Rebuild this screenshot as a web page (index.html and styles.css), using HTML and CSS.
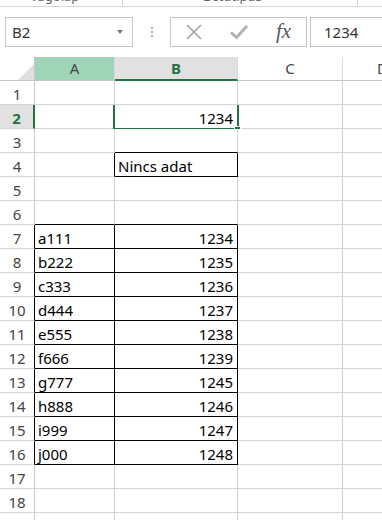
FILE: index.html
```html
<!DOCTYPE html>
<html lang="hu">
<head>
    <meta charset="UTF-8">
    <title>Munkafüzet</title>
    <link rel="stylesheet" href="styles.css">
</head>
<body>

    <!-- bottom edge of the ribbon -->
    <div class="ribbon">
        <div class="group g1"><span class="label">Vágólap</span></div>
        <div class="group g2"><span class="label">Betűtípus</span></div>
    </div>

    <!-- name box + formula bar -->
    <div class="formula-bar">
        <div class="name-box">
            <span>B2</span>
            <span class="arrow"></span>
        </div>
        <div class="grip"><i></i><i></i><i></i></div>
        <div class="fx-buttons">
            <span class="btn">
                <svg width="18" height="18" viewBox="0 0 18 18"><path d="M2 2 L16 16 M16 2 L2 16" stroke="#a3a3a3" stroke-width="1.6" fill="none"/></svg>
            </span>
            <span class="btn">
                <svg width="20" height="16" viewBox="0 0 20 16"><path d="M2 8.5 L7.5 13.5 L18 2" stroke="#b0b0b0" stroke-width="3" fill="none"/></svg>
            </span>
            <span class="btn fx">fx</span>
        </div>
        <div class="formula-input">1234</div>
    </div>

    <!-- the sheet -->
    <div class="sheet">
        <div class="row hdr">
            <div class="rh corner"><span class="tri"></span></div>
            <div class="ca col-on">A</div>
            <div class="cb col-sel">B</div>
            <div class="cc">C</div>
            <div class="cd">D</div>
        </div>
        <div class="row">
            <div class="rh">1</div><div class="ca"></div><div class="cb"></div><div class="cc"></div><div class="cd"></div>
        </div>
        <div class="row">
            <div class="rh rh-sel">2</div><div class="ca"></div>
            <div class="cb num sel-cell">1234<span class="sel"></span><span class="handle"></span></div>
            <div class="cc"></div><div class="cd"></div>
        </div>
        <div class="row">
            <div class="rh">3</div><div class="ca"></div><div class="cb bk-b"></div><div class="cc"></div><div class="cd"></div>
        </div>
        <div class="row">
            <div class="rh">4</div><div class="ca bk-r"></div><div class="cb bk-r bk-b">Nincs adat</div><div class="cc"></div><div class="cd"></div>
        </div>
        <div class="row">
            <div class="rh">5</div><div class="ca"></div><div class="cb"></div><div class="cc"></div><div class="cd"></div>
        </div>
        <div class="row">
            <div class="rh">6</div><div class="ca bk-b"></div><div class="cb bk-b"></div><div class="cc"></div><div class="cd"></div>
        </div>
        <div class="row">
            <div class="rh bk-r">7</div><div class="ca bk-r bk-b">a111</div><div class="cb num bk-r bk-b">1234</div><div class="cc"></div><div class="cd"></div>
        </div>
        <div class="row">
            <div class="rh bk-r">8</div><div class="ca bk-r bk-b">b222</div><div class="cb num bk-r bk-b">1235</div><div class="cc"></div><div class="cd"></div>
        </div>
        <div class="row">
            <div class="rh bk-r">9</div><div class="ca bk-r bk-b">c333</div><div class="cb num bk-r bk-b">1236</div><div class="cc"></div><div class="cd"></div>
        </div>
        <div class="row">
            <div class="rh bk-r">10</div><div class="ca bk-r bk-b">d444</div><div class="cb num bk-r bk-b">1237</div><div class="cc"></div><div class="cd"></div>
        </div>
        <div class="row">
            <div class="rh bk-r">11</div><div class="ca bk-r bk-b">e555</div><div class="cb num bk-r bk-b">1238</div><div class="cc"></div><div class="cd"></div>
        </div>
        <div class="row">
            <div class="rh bk-r">12</div><div class="ca bk-r bk-b">f666</div><div class="cb num bk-r bk-b">1239</div><div class="cc"></div><div class="cd"></div>
        </div>
        <div class="row">
            <div class="rh bk-r">13</div><div class="ca bk-r bk-b">g777</div><div class="cb num bk-r bk-b">1245</div><div class="cc"></div><div class="cd"></div>
        </div>
        <div class="row">
            <div class="rh bk-r">14</div><div class="ca bk-r bk-b">h888</div><div class="cb num bk-r bk-b">1246</div><div class="cc"></div><div class="cd"></div>
        </div>
        <div class="row">
            <div class="rh bk-r">15</div><div class="ca bk-r bk-b">i999</div><div class="cb num bk-r bk-b">1247</div><div class="cc"></div><div class="cd"></div>
        </div>
        <div class="row">
            <div class="rh bk-r">16</div><div class="ca bk-r bk-b">j000</div><div class="cb num bk-r bk-b">1248</div><div class="cc"></div><div class="cd"></div>
        </div>
        <div class="row">
            <div class="rh">17</div><div class="ca"></div><div class="cb"></div><div class="cc"></div><div class="cd"></div>
        </div>
        <div class="row">
            <div class="rh">18</div><div class="ca"></div><div class="cb"></div><div class="cc"></div><div class="cd"></div>
        </div>
        <div class="row">
            <div class="rh">19</div><div class="ca"></div><div class="cb"></div><div class="cc"></div><div class="cd"></div>
        </div>
    </div>

</body>
</html>
```

FILE: styles.css
```css
body { margin: 0; width: 382px; height: 520px; overflow: hidden; background: #fff; font-family: "Noto Sans", "Liberation Sans", sans-serif; }

/* ribbon remnant */
.ribbon { display: flex; height: 6px; border-bottom: 1px solid #d5d5d5; overflow: hidden; }
.group { box-sizing: border-box; border-right: 1px solid #d5d5d5; flex: none; }
.g1 { width: 123px; padding-left: 30px; }
.g2 { width: 235px; padding-left: 80px; }
.label { display: block; font-size: 13px; line-height: 13px; margin-top: -10px; color: #666; white-space: nowrap; }

/* formula bar */
.formula-bar { display: flex; align-items: center; height: 30px; margin: 10px 0; }
.name-box {
    box-sizing: border-box; width: 128px; height: 30px; margin-left: 5px;
    border: 1px solid #c6c6c6; display: flex; align-items: center; justify-content: space-between;
    padding: 0 9px 0 6px; font-size: 15px; color: #333; flex: none;
}
.arrow { width: 0; height: 0; border-left: 3.5px solid transparent; border-right: 3.5px solid transparent; border-top: 4px solid #777; }
.grip { width: 37px; display: flex; flex-direction: column; align-items: center; gap: 2px; flex: none; }
.grip i { display: block; width: 2px; height: 2px; background: #b4b4b4; }
.fx-buttons { box-sizing: border-box; width: 137px; height: 30px; border: 1px solid #c6c6c6; display: flex; flex: none; }
.btn { flex: 1; display: flex; align-items: center; justify-content: center; }
.fx { font-family: "Liberation Serif", serif; font-style: italic; font-size: 21px; color: #595959; padding-bottom: 2px; }
.formula-input {
    box-sizing: border-box; flex: 1; height: 30px; margin-left: 3px; border: 1px solid #c6c6c6; border-right: none;
    padding-left: 13px; font-size: 15px; line-height: 28px; color: #333;
}

/* grid */
.sheet { font-size: 15px; color: #000; }
.row { display: flex; height: 24px; overflow: hidden; }
.row > div {
    box-sizing: border-box; flex: none; height: 24px;
    border-right: 1px solid #d4d4d4; border-bottom: 1px solid #d4d4d4;
    padding: 3px 3px 0; line-height: 21px; white-space: nowrap; overflow: hidden;
}
.rh { width: 35px; text-align: center; color: #444; padding: 3px 0 0 !important; border-right-color: #c8c8c8 !important; }
.ca { width: 80px; }
.cb { width: 123px; }
.cc { width: 105px; }
.cd { width: 80px; }
.num { text-align: right; padding-right: 4px !important; }

.hdr > div { text-align: center; color: #444; padding: 0 !important; line-height: 23px; border-bottom-color: #c8c8c8; border-right-color: #dadada; }
.corner { display: flex; align-items: flex-end; justify-content: flex-end; padding: 0 2px 3px 0 !important; }
.tri { width: 0; height: 0; border-left: 16px solid transparent; border-bottom: 16px solid #dfdfdf; }
.col-on { background: #9fd5b7; }
.col-sel { background: #e1e1e1; color: #217346 !important; font-weight: bold; border-bottom: 2px solid #217346 !important; }
.rh-sel { background: #e1e1e1; color: #217346 !important; font-weight: bold; border-right: 2px solid #217346 !important; }

.bk-r { border-right-color: #000 !important; }
.bk-b { border-bottom-color: #000 !important; }

/* active cell */
.sel-cell { position: relative; overflow: visible !important; }
.sel { position: absolute; top: -2px; left: -2px; right: -2px; bottom: -2px; border: 2px solid #217346; }
.handle { position: absolute; right: -4px; bottom: -5px; width: 5px; height: 5px; background: #217346; border: 1px solid #fff; }
```
